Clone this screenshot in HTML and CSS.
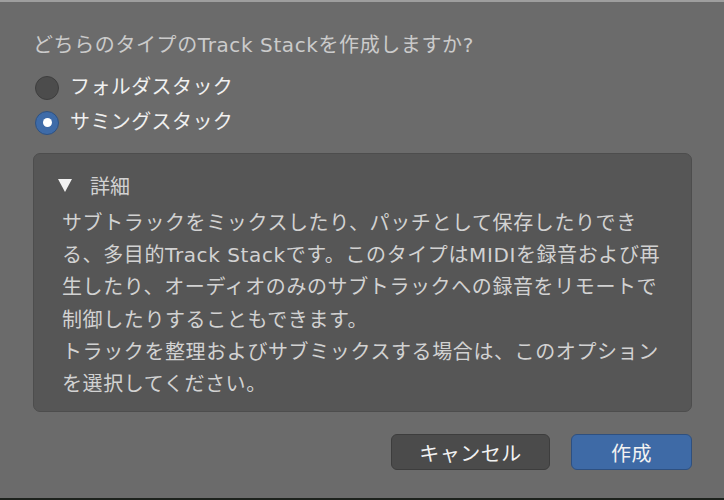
FILE: index.html
```html
<!DOCTYPE html>
<html lang="ja">
<head>
<meta charset="utf-8">
<link rel="stylesheet" href="styles.css">
</head>
<body>
<div class="window">
  <div class="dialog">
    <div class="title">どちらのタイプのTrack Stackを作成しますか?</div>
    <div class="options">
      <div class="option"><span class="radio"></span><span class="label">フォルダスタック</span></div>
      <div class="option"><span class="radio checked"></span><span class="label">サミングスタック</span></div>
    </div>
    <div class="details">
      <div class="details-head">
        <svg class="tri" width="14" height="13" viewBox="0 0 14 13"><polygon points="0,0 14,0 7,13" fill="#f2f2f2"/></svg>
        <span>詳細</span>
      </div>
      <div class="details-body">サブトラックをミックスしたり、パッチとして保存したりでき<br>る、多目的Track Stackです。このタイプはMIDIを録音および再<br>生したり、オーディオのみのサブトラックへの録音をリモートで<br>制御したりすることもできます。<br>トラックを整理およびサブミックスする場合は、このオプション<br>を選択してください。</div>
    </div>
    <div class="buttons">
      <button class="btn cancel">キャンセル</button>
      <button class="btn primary">作成</button>
    </div>
  </div>
  <div class="strip"></div>
</div>
</body>
</html>
```
FILE: styles.css
```css
html, body {
  margin: 0;
  padding: 0;
  background: #6b6b6b;
}
body {
  font-family: "DejaVu Sans", "Noto Sans CJK JP", sans-serif;
  width: 724px;
  height: 500px;
  overflow: hidden;
}
.window {
  height: 500px;
  display: flex;
  flex-direction: column;
  border-top: 2px solid #9e9e9e;
  box-sizing: border-box;
}
.dialog {
  flex: 1;
  padding: 27px 32px 0 33px;
  display: flex;
  flex-direction: column;
}
.title {
  font-size: 20px;
  line-height: 32px;
  letter-spacing: 0.6px;
  color: #cbcbcb;
  white-space: nowrap;
}
.options {
  margin-top: 9px;
  display: flex;
  flex-direction: column;
}
.option {
  height: 35px;
  display: flex;
  align-items: center;
  gap: 11px;
}
.radio {
  width: 24px;
  height: 24px;
  margin-left: 2px;
  box-sizing: border-box;
  border-radius: 50%;
  background: #4c4c4c;
  border: 1px solid #3e3e3e;
  display: flex;
  align-items: center;
  justify-content: center;
}
.radio.checked {
  background: #3e6ba8;
  border-color: #2f5282;
}
.radio.checked::after {
  content: "";
  width: 9px;
  height: 9px;
  border-radius: 50%;
  background: #ffffff;
}
.label {
  font-size: 20px;
  line-height: 35px;
  letter-spacing: 0.4px;
  color: #f0f0f0;
  white-space: nowrap;
}
.details {
  margin-top: 13px;
  height: 259px;
  box-sizing: border-box;
  background: #565656;
  border: 1px solid #4d4d4d;
  border-radius: 7px;
  padding: 15px 20px 0 28px;
}
.details-head {
  display: flex;
  align-items: center;
  gap: 18px;
  margin-left: -4px;
  height: 32px;
  font-size: 20px;
  color: #d2d2d2;
}
.tri {
  display: block;
}
.details-body {
  margin-top: 6px;
  font-size: 20px;
  line-height: 32.2px;
  letter-spacing: 0.6px;
  color: #d2d2d2;
  white-space: nowrap;
}
.buttons {
  margin-top: 22px;
  display: flex;
  justify-content: flex-end;
  gap: 21px;
}
.btn {
  height: 36px;
  box-sizing: border-box;
  border-radius: 6px;
  font-family: "DejaVu Sans", "Noto Sans CJK JP", sans-serif;
  font-size: 20px;
  letter-spacing: 0.5px;
  color: #f2f2f2;
  padding: 0;
  display: flex;
  align-items: center;
  justify-content: center;
}
.cancel {
  width: 159px;
  background: #4b4b4b;
  border: 1px solid #3d3d3d;
}
.primary {
  width: 121px;
  background: #3e6aa6;
  border: 1px solid #2e5080;
}
.strip {
  height: 2px;
  background: #1d221d;
}
```
